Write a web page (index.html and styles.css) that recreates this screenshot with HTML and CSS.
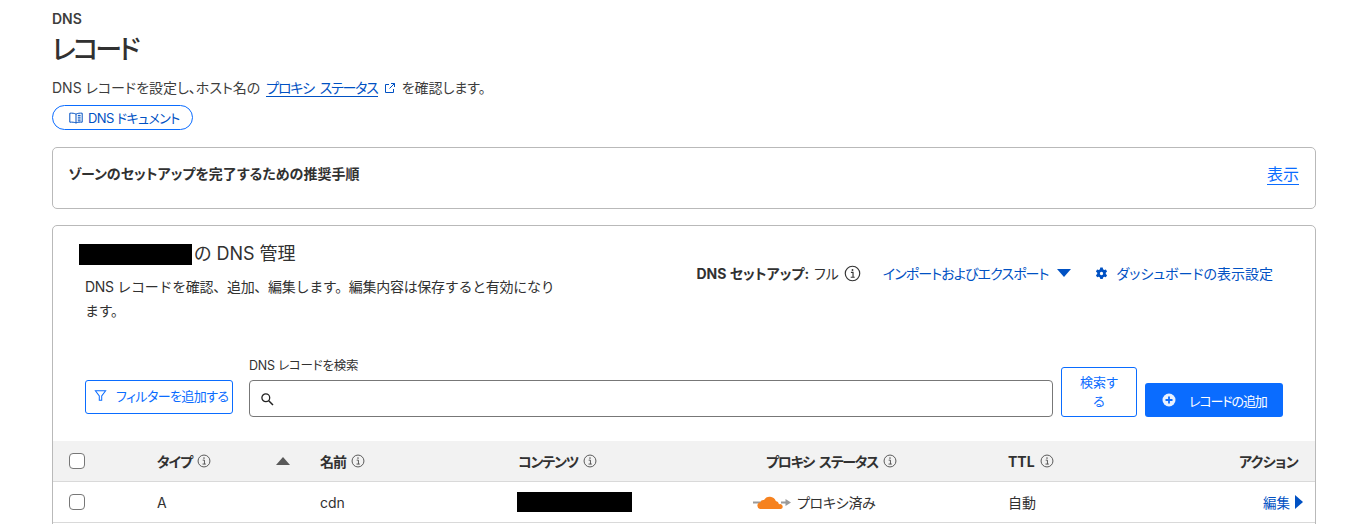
FILE: index.html
```html
<!DOCTYPE html>
<html lang="ja">
<head>
<meta charset="utf-8">
<title>DNS レコード</title>
<link rel="stylesheet" href="styles.css">
</head>
<body>
<main class="page">
  <div class="crumb">DNS</div>
  <h1 class="title">レコード</h1>
  <p class="intro">DNS レコードを設定し、ホスト名の <a class="link" href="#">プロキシ ステータス</a><svg class="ext" viewBox="0 0 12 12" width="12" height="12"><path d="M9.500 7v3.500h-8v-8H5M7 1.500h3.500V5M10.500 1.500 5.500 6.500" fill="none" stroke="#0051c3" stroke-width="1"/></svg>を確認します。</p>
  <a class="pill" href="#"><svg viewBox="0 0 14 12" width="14" height="12"><path d="M7 2.200C5.500 1.200 3 1 .8 1.200v9C3 10 5.500 10.200 7 11c1.500-.8 4-1 6.200-.8v-9C11 1 8.500 1.200 7 2.200zM7 2.200V11M8.800 3.400h2.800M8.800 5.200h2.800M8.800 7h2.800M8.800 8.800h2.800" fill="none" stroke="#0051c3" stroke-width="1"/></svg>DNS ドキュメント</a>

  <section class="card steps">
    <strong class="steps-title">ゾーンのセットアップを完了するための推奨手順</strong>
    <a class="link show" href="#">表示</a>
  </section>

  <section class="card manage">
    <div class="head">
      <div class="head-left">
        <h2 class="manage-title"><span class="redact redact-name"></span>の DNS 管理</h2>
        <p class="manage-desc">DNS レコードを確認、追加、編集します。編集内容は保存すると有効になります。</p>
      </div>
      <div class="head-right">
        <span class="setup"><b>DNS セットアップ:</b><span>フル</span><svg class="info info-lg" viewBox="0 0 16 16"><use href="#i-info"/></svg></span>
        <a class="action import" href="#">インポートおよびエクスポート<svg viewBox="0 0 14 8" width="14" height="8"><path d="M0 0h14L7 8z" fill="#0051c3"/></svg></a>
        <a class="action gear" href="#"><svg viewBox="0 0 14 14" width="13" height="13"><path fill="#0051c3" fill-rule="evenodd" d="M5.700.6h2.600l.4 1.800 1.200.7 1.800-.5 1.300 2.200-1.400 1.300v1.400l1.400 1.300-1.300 2.200-1.800-.5-1.200.7-.4 1.800H5.700l-.4-1.800-1.200-.7-1.800.5L1 8.800l1.400-1.300V6.100L1 4.800l1.300-2.200 1.800.5 1.200-.7zM7 5.200a1.800 1.800 0 1 0 0 3.600 1.800 1.800 0 0 0 0-3.600z"/></svg>ダッシュボードの表示設定</a>
      </div>
    </div>

    <div class="tools">
      <button class="btn-outline filter" type="button"><svg viewBox="0 0 14 14" width="13" height="13"><path d="M1.500 2h11L8.300 7.500V12H5.700V7.500z" fill="none" stroke="#0a6cff" stroke-width="1.100"/></svg>フィルターを追加する</button>
      <div class="search">
        <label class="search-label" for="q">DNS レコードを検索</label>
        <div class="search-box">
          <svg viewBox="0 0 14 14" width="14" height="14"><circle cx="5.800" cy="5.800" r="3.900" fill="none" stroke="#222" stroke-width="1.300"/><path d="M8.700 8.700 13 13" stroke="#222" stroke-width="1.500"/></svg>
          <input id="q" class="search-input" type="text">
        </div>
      </div>
      <button class="btn-outline go" type="button">検索する</button>
      <button class="btn-primary" type="button"><svg viewBox="0 0 14 14" width="14" height="14"><circle cx="7" cy="7" r="6.500" fill="#e8f1ff"/><path d="M7 3.500v7M3.500 7h7" stroke="#0a6cff" stroke-width="1.800"/></svg>レコードの追加</button>
    </div>

    <div class="table">
      <div class="row row-head">
        <span class="check"></span>
        <span class="col-type"><b>タイプ</b><svg class="info" viewBox="0 0 16 16"><use href="#i-info"/></svg></span>
        <svg class="sort" viewBox="0 0 14 8" width="14" height="8"><path d="M7 0l7 8H0z" fill="#595959"/></svg>
        <span><b>名前</b><svg class="info" viewBox="0 0 16 16"><use href="#i-info"/></svg></span>
        <span><b>コンテンツ</b><svg class="info" viewBox="0 0 16 16"><use href="#i-info"/></svg></span>
        <span><b class="spaced">プロキシ ステータス</b><svg class="info" viewBox="0 0 16 16"><use href="#i-info"/></svg></span>
        <span><b class="latin">TTL</b><svg class="info" viewBox="0 0 16 16"><use href="#i-info"/></svg></span>
        <span class="end"><b class="last">アクション</b></span>
      </div>
      <div class="row">
        <span class="check"></span>
        <span class="col-type">A</span>
        <span></span>
        <span>cdn</span>
        <span class="redact redact-content"></span>
        <span class="proxy"><svg viewBox="0 0 38 16" width="38" height="16">
            <path d="M0 8.500h8M28 8.500h6" stroke="#9a9a9a" stroke-width="2"/><path d="M32.500 5l5.500 3.500-5.500 3.500z" fill="#9a9a9a"/>
            <path fill="#f6821f" d="M8 15a3.300 3.300 0 0 1 .2-6.500 3.500 3.500 0 0 1 3.800-2.400A6.500 6.500 0 0 1 23.800 7a3.800 3.800 0 0 1 3.200 3.200A2.500 2.500 0 0 1 29 15z" transform="translate(-1 0)"/>
          </svg>プロキシ済み</span>
        <span>自動</span>
        <a class="edit end" href="#">編集<svg viewBox="0 0 8 14" width="8" height="14"><path d="M0 0l8 7-8 7z" fill="#0051c3"/></svg></a>
      </div>
    </div>
  </section>
</main>
<svg class="defs" width="0" height="0"><defs>
  <g id="i-info"><circle cx="8" cy="8" r="6.800" fill="none" stroke="currentColor" stroke-width="1.100"/><path d="M6.500 7h2v4.500M6.300 11.500h3.800" fill="none" stroke="currentColor" stroke-width="1.100"/><circle cx="8" cy="4.700" r=".9" fill="currentColor"/></g>
</defs></svg>
</body>
</html>
```
FILE: styles.css
```css
* { box-sizing: border-box; }
html, body { margin: 0; padding: 0; background: #fff; }
html { overflow: hidden; }
body {
  height: 524px;
  overflow: hidden;
  color: #313131;
  font-family: Inter, "Noto Sans CJK JP", sans-serif;
  font-size: 14px;
  font-feature-settings: "palt";
}
.defs { position: absolute; }
.page { width: 1316px; height: 524px; overflow: hidden; padding: 10px 0 0 52px; }
.crumb { font-size: 14px; font-weight: 600; line-height: 17px; color: #3d3d3d; }
.title { margin: 3px 0 0; font-size: 27px; font-weight: 500; line-height: 40px; letter-spacing: -3px; color: #313131; }
.intro { margin: 7px 0 0; font-size: 14px; line-height: 22px; color: #3d3d3d; }
.link { color: #0051c3; text-decoration: none; border-bottom: 1px solid #0051c3; }
.intro .link { letter-spacing: -1.200px; word-spacing: 3px; margin-left: 2px; }
.ext { margin: 0 6px; vertical-align: -1px; }
.pill {
  display: flex; align-items: center; gap: 5px;
  margin-top: 6px; height: 25px; width: 141px; padding-left: 16px;
  border: 1px solid #0a6cff; border-radius: 13px;
  color: #0051c3; font-size: 13px; letter-spacing: -.6px; text-decoration: none;
}
.pill svg, .filter svg, .btn-primary svg { flex: none; }
.card { border: 1px solid #b9b9b9; border-radius: 5px; background: #fff; }
.steps { display: flex; justify-content: space-between; margin-top: 17px; height: 62px; padding: 14px 16px 0 15px; }
.steps-title { font-size: 14px; font-weight: 700; line-height: 24px; }
.show { align-self: flex-start; margin-top: 3px; font-size: 16px; line-height: 19px; color: #0a6cff; border-color: #0a6cff; }
.manage { margin-top: 16px; height: 340px; overflow: hidden; }
.head { display: flex; justify-content: space-between; padding: 14px 42px 0 26px; height: 109px; }
.head-left { width: 482px; }
.manage-title { margin: 0; display: flex; align-items: center; font-size: 18px; font-weight: 400; line-height: 28px; }
.redact { display: block; background: #000; }
.redact-name { width: 113px; height: 21px; margin-right: 2px; }
.manage-desc { margin: 7px 0 0 6px; font-size: 14px; line-height: 24px; font-feature-settings: normal; letter-spacing: -.3px; }
.head-right { display: flex; align-items: center; align-self: flex-start; gap: 22px; margin-top: 21px; height: 24px; }
.setup { display: flex; align-items: center; gap: 5px; font-size: 14px; }
.setup b { font-weight: 700; }
.action { display: flex; align-items: center; gap: 8px; color: #0051c3; font-size: 14px; text-decoration: none; }
.import { letter-spacing: -.9px; margin-right: 2px; }
.gear { gap: 9px; }
.info { width: 14px; height: 14px; margin-left: 5px; color: #555; flex: none; }
.info-lg { width: 17px; height: 17px; margin-left: 0; color: #333; }
.tools { display: flex; align-items: flex-end; gap: 12px; padding: 0 32px 0 32px; height: 82px; }
.btn-outline {
  background: #fff; border: 1px solid #0a6cff; border-radius: 3px;
  color: #0a6cff; font: inherit; font-size: 13px;
}
.filter { display: flex; align-items: center; gap: 9px; width: 148px; height: 34px; padding: 0 0 3px 8px; margin-bottom: 3px; letter-spacing: -.6px; white-space: nowrap; }
.search { width: 804px; margin-left: 4px; }
.search-label { display: block; font-size: 12.500px; line-height: 18px; letter-spacing: -.2px; margin-bottom: 5px; }
.search-box { display: flex; align-items: center; gap: 7px; height: 37px; padding-left: 10px; border: 1px solid #777; border-radius: 4px; }
.search-input { flex: 1; border: 0; outline: 0; background: transparent; height: 100%; }
.go { width: 76px; height: 50px; margin-left: -4px; padding: 0 15px; line-height: 19px; }
.btn-primary {
  display: flex; align-items: center; gap: 13px; width: 138px; height: 34px; margin-left: -4px; padding: 0 0 0 17px;
  background: #0a6cff; border: 0; border-radius: 3px; color: #fff; font: inherit; font-size: 13px; letter-spacing: -1.100px; white-space: nowrap;
}
.table { margin-top: 24px; }
.row {
  display: grid; grid-template-columns: 88px 116px 47px 198px 248px 242px 1fr 100px;
  align-items: center; height: 41px; padding: 0 12px 0 16px; border-bottom: 1px solid #d9d9d9; font-size: 14px;
}
.row-head { background: #f2f2f2; }
.row-head b { font-weight: 700; letter-spacing: -1.100px; }
.row-head b.spaced { letter-spacing: -1.300px; word-spacing: 3px; }
.row-head b.latin { letter-spacing: 0; }
.row-head b.last { letter-spacing: -.6px; }
.row > span { display: flex; align-items: center; white-space: nowrap; }
.check { width: 16px; height: 16px; border: 1px solid #777; border-radius: 4px; background: #fff; }
.sort { align-self: center; margin-left: 3px; }
.end { justify-self: end; }
.row-head .end { margin-right: 5px; }
.redact-content { width: 115px; height: 20px; margin-left: -1px; }
.proxy { gap: 6px; margin-left: -13px; letter-spacing: -.3px; }
.edit { display: flex; align-items: center; gap: 5px; color: #0051c3; font-size: 13.500px; text-decoration: none; }
```
